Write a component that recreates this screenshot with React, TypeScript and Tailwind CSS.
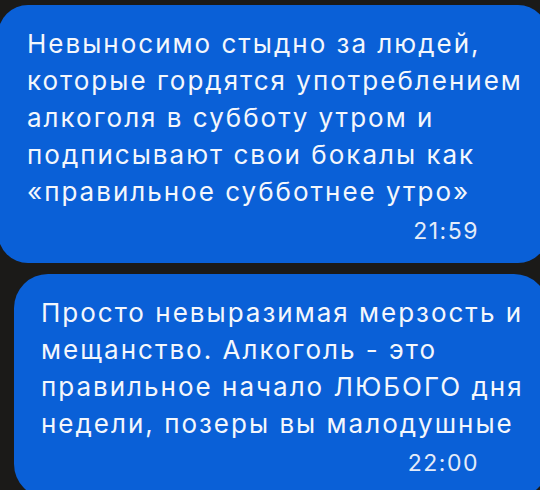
const messages = [
  {
    lines: [
      'Невыносимо стыдно за людей,',
      'которые гордятся употреблением',
      'алкоголя в субботу утром и',
      'подписывают свои бокалы как',
      '«правильное субботнее утро»',
    ],
    time: '21:59',
  },
  {
    lines: [
      'Просто невыразимая мерзость и',
      'мещанство. Алкоголь - это',
      'правильное начало ЛЮБОГО дня',
      'недели, позеры вы малодушные',
    ],
    time: '22:00',
  },
];

function Bubble({ lines, time, first }: { lines: string[]; time: string; first?: boolean }) {
  return (
    <div
      className={
        first
          ? 'ml-[-2px] mr-[-8px] rounded-[30px] bg-[#0a60d7] pl-[29px] pt-[20px] pb-[17px]'
          : 'ml-[14px] mr-[-8px] rounded-[34px] bg-[#0a60d7] pl-[27px] pt-[20px] pb-[20px]'
      }
    >
      <p className="text-[26px] leading-[37px] tracking-[2px] text-[#f4f7fc]">
        {lines.map((line) => (
          <span key={line} className="block whitespace-nowrap">
            {line}
          </span>
        ))}
      </p>
      <div className="mt-[6px] flex justify-end pr-[69px] text-[23px] leading-[30px] tracking-[1.5px] text-[#e4ecf9]">
        {time}
      </div>
    </div>
  );
}

export default function App() {
  return (
    <div className="h-[490px] w-[540px] overflow-hidden bg-[#1b1a18] pt-[5px] font-['Inter','Noto_Sans',sans-serif]">
      <div className="flex flex-col gap-[11px]">
        {messages.map((m, i) => (
          <Bubble key={m.time} lines={m.lines} time={m.time} first={i === 0} />
        ))}
      </div>
    </div>
  );
}
